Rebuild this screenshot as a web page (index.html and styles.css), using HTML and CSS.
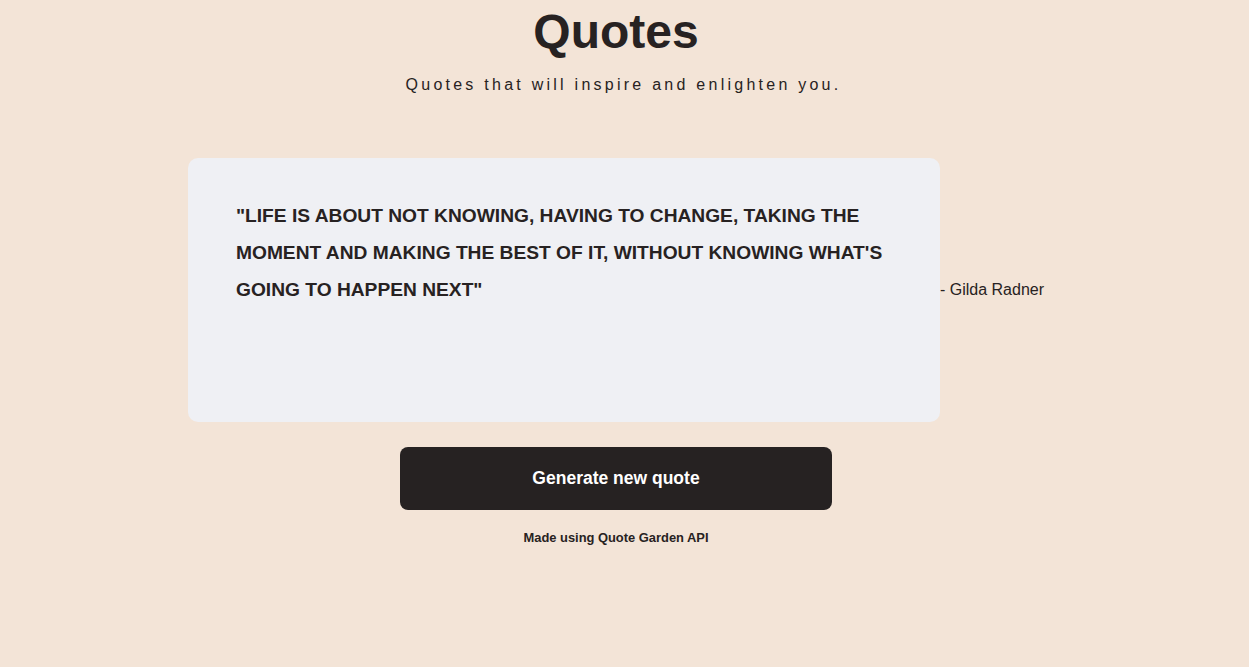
FILE: index.html
```html
<!DOCTYPE html>
<html lang="en">
<head>
<meta charset="utf-8">
<title>Quotes</title>
<link rel="stylesheet" href="styles.css">
</head>
<body>
<main class="page">
  <header class="header">
    <h1 class="title">Quotes</h1>
    <p class="subtitle">Quotes that will inspire and enlighten you.</p>
  </header>
  <section class="quote-row">
    <div class="quote-card">
      <p class="quote-text">"Life is about not knowing, having to change, taking the moment and making the best of it, without knowing what's going to happen next"</p>
    </div>
    <p class="author">- Gilda Radner</p>
  </section>
  <button class="generate-btn" type="button">Generate new quote</button>
  <p class="credit">Made using Quote Garden API</p>
</main>
</body>
</html>
```
FILE: styles.css
```css
html, body {
  margin: 0;
  padding: 0;
  background: #f3e4d7;
}
body {
  font-family: "Liberation Sans", Arial, sans-serif;
  color: #272222;
  width: 1232px;
}
.page {
  display: flex;
  flex-direction: column;
  align-items: center;
}
.header {
  display: flex;
  flex-direction: column;
  align-items: center;
}
.title {
  margin: 4px 0 0;
  font-size: 48px;
  font-weight: 700;
  line-height: 55px;
}
.subtitle {
  margin: 17px 0 0 15px;
  font-size: 16px;
  letter-spacing: 3.25px;
  line-height: 18px;
}
.quote-row {
  margin-top: 64px;
  display: flex;
  align-items: center;
}
.quote-card {
  width: 752px;
  height: 264px;
  box-sizing: border-box;
  padding: 39px 48px 40px;
  background: #eff0f4;
  border-radius: 10px;
}
.quote-text {
  margin: 0;
  font-size: 19.2px;
  font-weight: 700;
  line-height: 37px;
  text-transform: uppercase;
}
.author {
  margin: 0;
  font-size: 16px;
  line-height: 18px;
}
.generate-btn {
  margin-top: 25px;
  width: 432px;
  height: 63px;
  border: none;
  border-radius: 8px;
  background: #262222;
  color: #ffffff;
  font-family: "Liberation Sans", Arial, sans-serif;
  font-size: 17.5px;
  font-weight: 700;
  cursor: pointer;
}
.credit {
  margin: 20px 0 0;
  font-size: 12.9px;
  font-weight: 700;
  line-height: 16px;
}
```
